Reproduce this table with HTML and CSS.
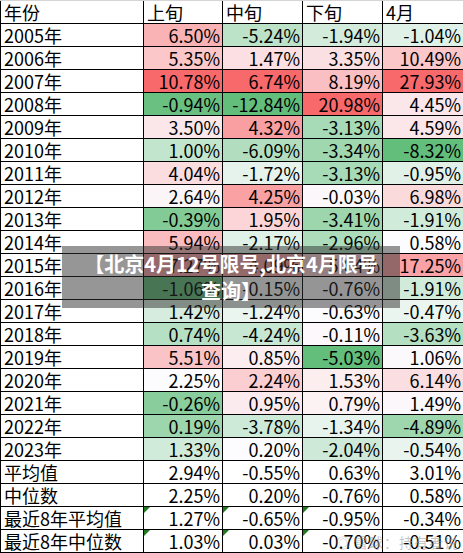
FILE: index.html
```html
<!DOCTYPE html>
<html lang="zh-CN">
<head>
<meta charset="utf-8">
<title>北京4月12号限号</title>
<link rel="stylesheet" href="styles.css">
</head>
<body>
<div class="sheet">
  <div class="grid">
    <div class="row head"><div class="cell">年份</div><div class="cell">上旬</div><div class="cell">中旬</div><div class="cell">下旬</div><div class="cell">4月</div></div>
    <div class="row year"><div class="cell">2005年</div><div class="cell num">6.50%</div><div class="cell num">-5.24%</div><div class="cell num">-1.94%</div><div class="cell num">-1.04%</div></div>
    <div class="row year"><div class="cell">2006年</div><div class="cell num">5.35%</div><div class="cell num">1.47%</div><div class="cell num">3.35%</div><div class="cell num">10.49%</div></div>
    <div class="row year"><div class="cell">2007年</div><div class="cell num">10.78%</div><div class="cell num">6.74%</div><div class="cell num">8.19%</div><div class="cell num">27.93%</div></div>
    <div class="row year"><div class="cell">2008年</div><div class="cell num">-0.94%</div><div class="cell num">-12.84%</div><div class="cell num">20.98%</div><div class="cell num">4.45%</div></div>
    <div class="row year"><div class="cell">2009年</div><div class="cell num">3.50%</div><div class="cell num">4.32%</div><div class="cell num">-3.13%</div><div class="cell num">4.59%</div></div>
    <div class="row year"><div class="cell">2010年</div><div class="cell num">1.00%</div><div class="cell num">-6.09%</div><div class="cell num">-3.34%</div><div class="cell num">-8.32%</div></div>
    <div class="row year"><div class="cell">2011年</div><div class="cell num">4.04%</div><div class="cell num">-1.72%</div><div class="cell num">-3.13%</div><div class="cell num">-0.95%</div></div>
    <div class="row year"><div class="cell">2012年</div><div class="cell num">2.64%</div><div class="cell num">4.25%</div><div class="cell num">-0.03%</div><div class="cell num">6.98%</div></div>
    <div class="row year"><div class="cell">2013年</div><div class="cell num">-0.39%</div><div class="cell num">1.95%</div><div class="cell num">-3.41%</div><div class="cell num">-1.91%</div></div>
    <div class="row year"><div class="cell">2014年</div><div class="cell num">5.94%</div><div class="cell num">-2.17%</div><div class="cell num">-2.96%</div><div class="cell num">0.58%</div></div>
    <div class="row year"><div class="cell">2015年</div><div class="cell num">7.27%</div><div class="cell num">4.09%</div><div class="cell num">5.64%</div><div class="cell num">17.25%</div></div>
    <div class="row year"><div class="cell">2016年</div><div class="cell num">-1.06%</div><div class="cell num">-0.15%</div><div class="cell num">-0.76%</div><div class="cell num">-1.91%</div></div>
    <div class="row year"><div class="cell">2017年</div><div class="cell num">1.42%</div><div class="cell num">-1.24%</div><div class="cell num">-0.63%</div><div class="cell num">-0.47%</div></div>
    <div class="row year"><div class="cell">2018年</div><div class="cell num">0.74%</div><div class="cell num">-4.24%</div><div class="cell num">-0.11%</div><div class="cell num">-3.63%</div></div>
    <div class="row year"><div class="cell">2019年</div><div class="cell num">5.51%</div><div class="cell num">0.85%</div><div class="cell num">-5.03%</div><div class="cell num">1.06%</div></div>
    <div class="row year"><div class="cell">2020年</div><div class="cell num">2.25%</div><div class="cell num">2.24%</div><div class="cell num">1.53%</div><div class="cell num">6.14%</div></div>
    <div class="row year"><div class="cell">2021年</div><div class="cell num">-0.26%</div><div class="cell num">0.95%</div><div class="cell num">0.79%</div><div class="cell num">1.49%</div></div>
    <div class="row year"><div class="cell">2022年</div><div class="cell num">0.19%</div><div class="cell num">-3.78%</div><div class="cell num">-1.34%</div><div class="cell num">-4.89%</div></div>
    <div class="row year"><div class="cell">2023年</div><div class="cell num">1.33%</div><div class="cell num">0.20%</div><div class="cell num">-2.04%</div><div class="cell num">-0.54%</div></div>
    <div class="row"><div class="cell">平均值</div><div class="cell num">2.94%</div><div class="cell num">-0.55%</div><div class="cell num">0.63%</div><div class="cell num">3.01%</div></div>
    <div class="row"><div class="cell">中位数</div><div class="cell num">2.25%</div><div class="cell num">0.20%</div><div class="cell num">-0.76%</div><div class="cell num">0.58%</div></div>
    <div class="row"><div class="cell">最近8年平均值</div><div class="cell num flag">1.27%</div><div class="cell num flag">-0.65%</div><div class="cell num flag">-0.95%</div><div class="cell num">-0.34%</div></div>
    <div class="row"><div class="cell">最近8年中位数</div><div class="cell num flag">1.03%</div><div class="cell num flag">0.03%</div><div class="cell num flag">-0.70%</div><div class="cell num">-0.51%</div></div>
  </div>
  <div class="banner">【北京4月12号限号,北京4月限号查询】</div>
  <div class="watermark"><span class="wm-logo">◎</span>雪球：持有者说</div>
</div>
<script src="script.js"></script>
</body>
</html>
```

FILE: styles.css
```css
html, body {
  margin: 0;
  padding: 0;
  background: #ffffff;
}
body {
  width: 463px;
  height: 553px;
  overflow: hidden;
}
.sheet {
  position: relative;
  width: 463px;
  height: 553px;
  overflow: hidden;
  border-top: 1px solid #d4d4d4;
  box-sizing: border-box;
  font-family: "Liberation Sans Narrow", "Noto Sans CJK SC", sans-serif;
  font-size: 18px;
  color: #000;
}
.grid {
  display: flex;
  flex-direction: column;
  width: 464px;
  border-left: 1px solid #000;
}
.row {
  display: grid;
  grid-template-columns: 143px 79px 80px 80px 81px;
  height: 23px;
}
.cell {
  position: relative;
  box-sizing: border-box;
  height: 23px;
  border-right: 1px solid #000;
  border-bottom: 1px solid #000;
  padding: 1px 3px 0 3px;
  line-height: 21px;
  white-space: nowrap;
}
.cell.num {
  text-align: right;
  padding-right: 2px;
}
.cell.flag::before {
  content: "";
  position: absolute;
  left: 0;
  top: 0;
  width: 0;
  height: 0;
  border-top: 6px solid #1f7a1f;
  border-right: 6px solid transparent;
}
.banner {
  position: absolute;
  left: 62px;
  top: 245px;
  width: 338px;
  box-sizing: border-box;
  padding: 4px 14px;
  background: rgba(45, 45, 45, 0.5);
  color: #ffffff;
  font-family: "Noto Sans CJK SC", sans-serif;
  font-weight: bold;
  font-size: 20px;
  line-height: 27px;
  text-align: center;
}
.watermark {
  position: absolute;
  left: 336px;
  top: 533px;
  font-family: "Noto Sans CJK SC", sans-serif;
  font-size: 14px;
  line-height: 16px;
  letter-spacing: 1px;
  color: rgba(150, 150, 150, 0.55);
  white-space: nowrap;
}
.wm-logo {
  margin-right: 3px;
}
```

FILE: script.js
```js
(function () {
  var rows = Array.prototype.slice.call(document.querySelectorAll('.row.year'));
  var red = [248, 105, 107], white = [252, 252, 255], green = [99, 190, 123];
  function mix(a, b, t) {
    return 'rgb(' + [0, 1, 2].map(function (i) { return Math.round(a[i] + (b[i] - a[i]) * t); }).join(',') + ')';
  }
  for (var c = 1; c <= 4; c++) {
    var cells = rows.map(function (r) { return r.children[c]; });
    var vals = cells.map(function (el) { return parseFloat(el.textContent); });
    var s = vals.slice().sort(function (a, b) { return a - b; });
    var n = s.length, pos = (n - 1) * 0.5, lo = Math.floor(pos);
    var med = s[lo] + (s[Math.min(lo + 1, n - 1)] - s[lo]) * (pos - lo);
    var min = s[0], max = s[n - 1];
    cells.forEach(function (el, i) {
      var v = vals[i], col;
      if (v >= med) col = mix(white, red, max === med ? 0 : (v - med) / (max - med));
      else col = mix(white, green, (med - v) / (med - min));
      el.style.backgroundColor = col;
    });
  }
})();
```
